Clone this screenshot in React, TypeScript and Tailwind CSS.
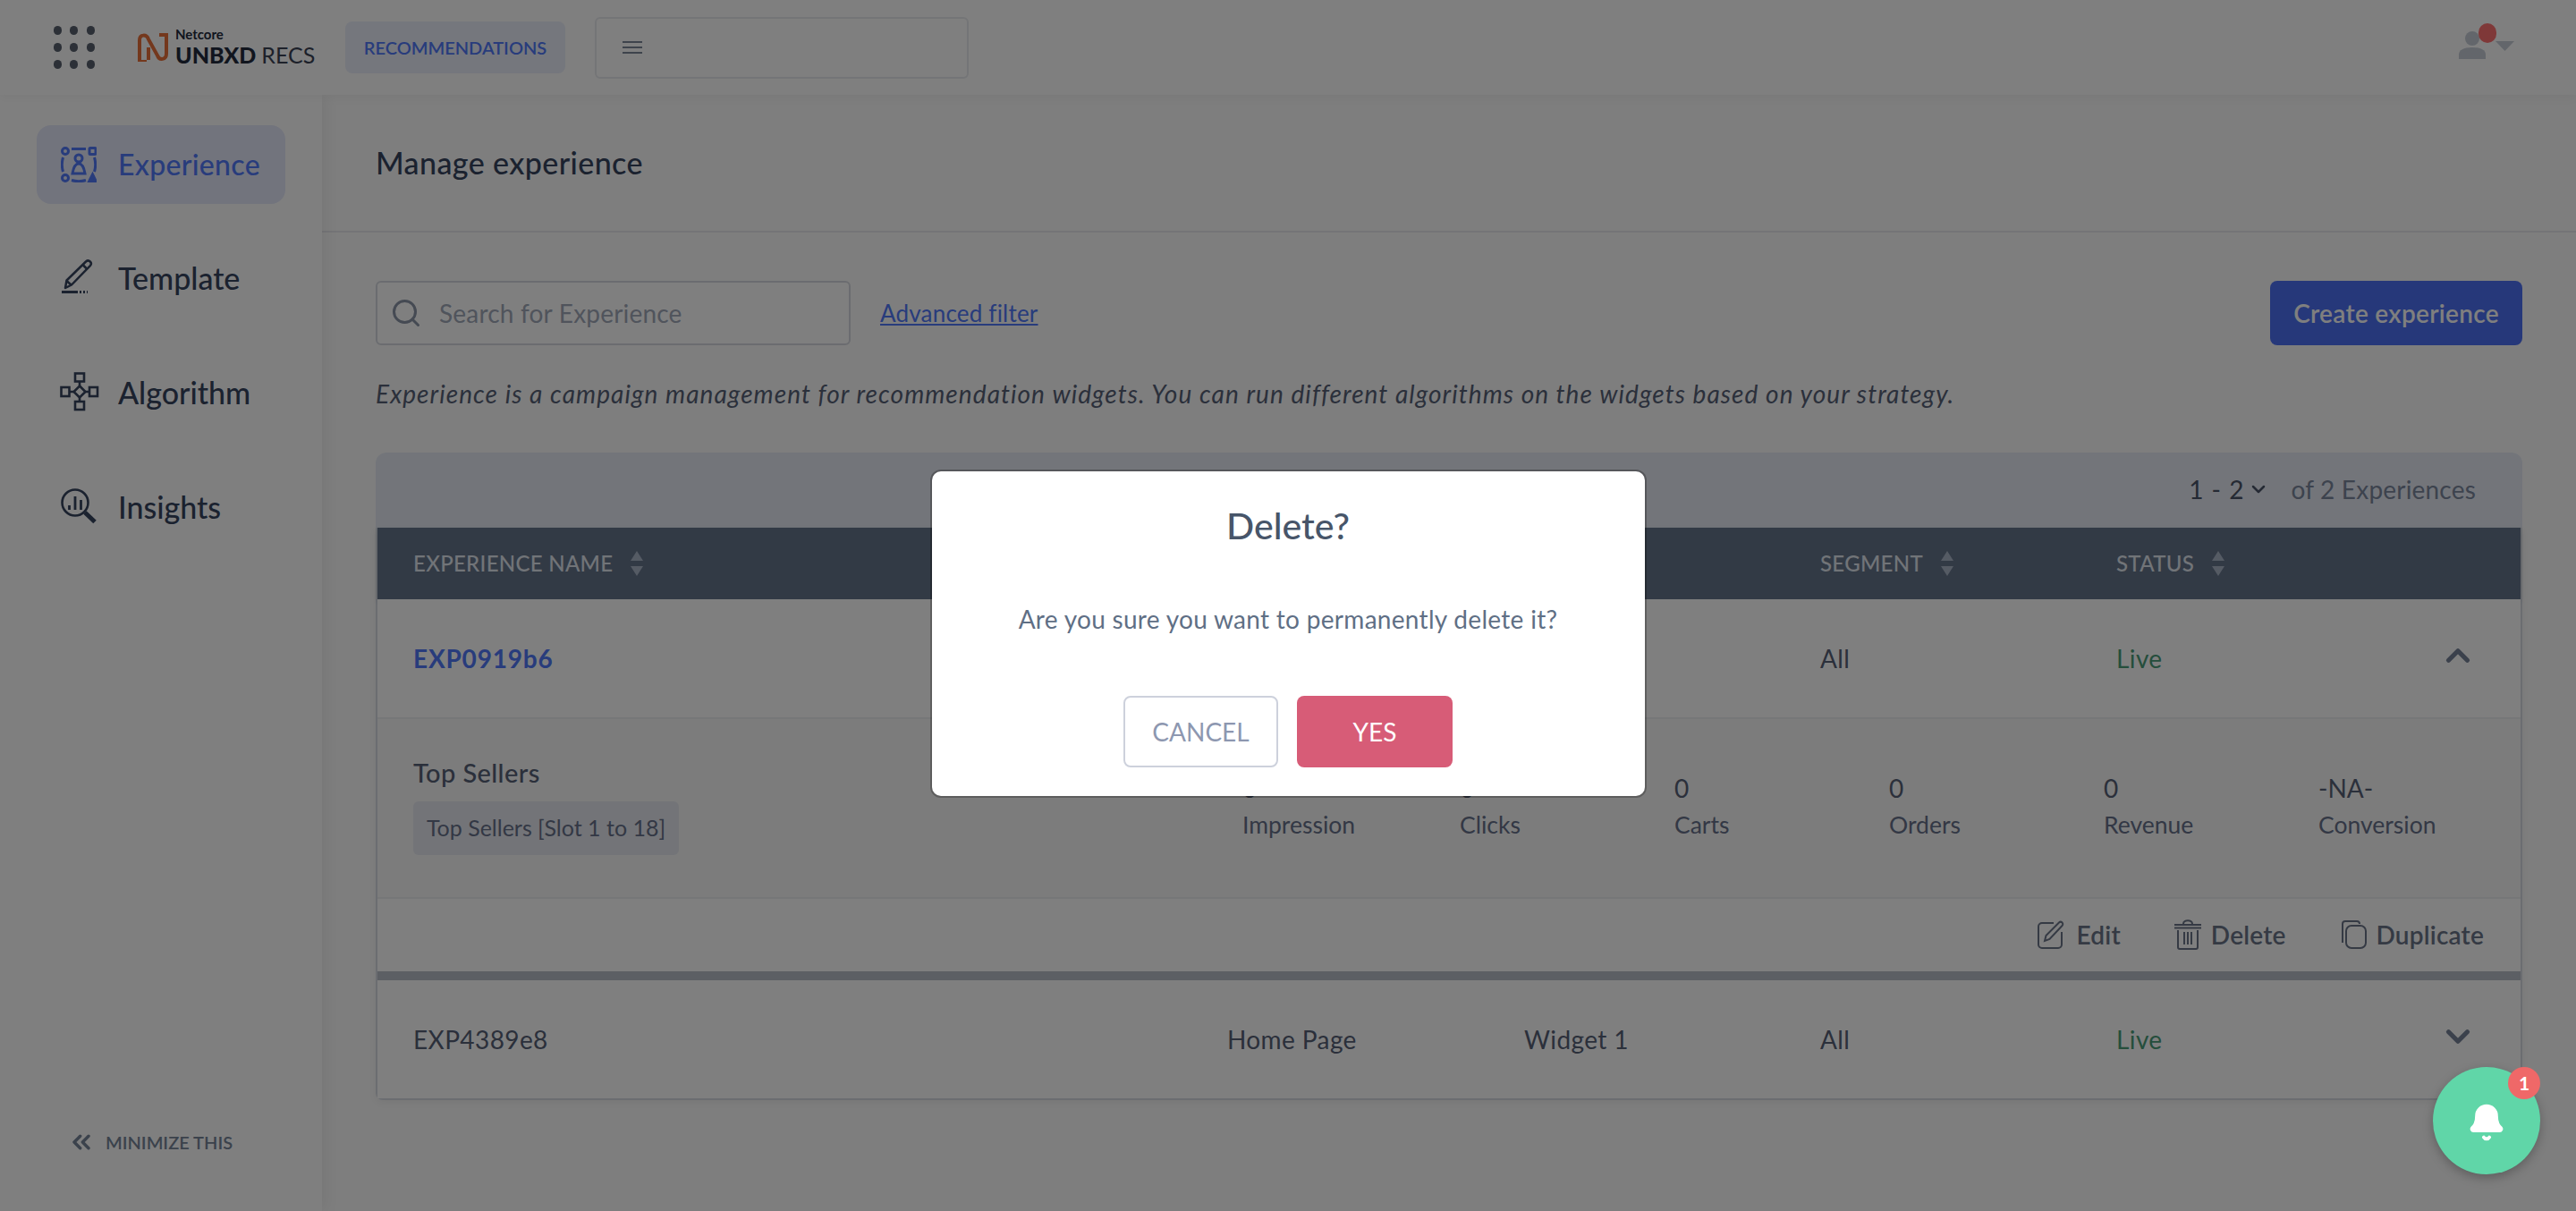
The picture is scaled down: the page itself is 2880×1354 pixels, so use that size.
import { Bell, ChevronDown, ChevronUp, ChevronsLeft, Search } from "lucide-react";

const navItems = [
  { label: "Template", icon: <TemplateIcon /> },
  { label: "Algorithm", icon: <AlgorithmIcon /> },
  { label: "Insights", icon: <InsightsIcon /> },
];

const metrics = [
  { value: "0", label: "Impression" },
  { value: "0", label: "Clicks" },
  { value: "0", label: "Carts" },
  { value: "0", label: "Orders" },
  { value: "0", label: "Revenue" },
  { value: "-NA-", label: "Conversion" },
];

function ExperienceIcon() {
  return (
    <svg width="40" height="40" viewBox="0 0 40 40" fill="none" stroke="currentColor" strokeWidth="3">
      <circle cx="5" cy="5" r="3.5" />
      <rect x="32" y="1.5" width="7" height="7" rx="1" />
      <circle cx="5" cy="35" r="3.5" />
      <path d="M35.5 31 39.5 39h-8z" fill="currentColor" />
      <path d="M12 2.5h16M12 37.5c5 1.5 11 1.5 16 0M2.5 12c-1.500 5-1.500 11 0 16M37.500 12c1.500 5 1.500 11 0 16" />
      <circle cx="20" cy="13" r="4" />
      <path d="M20 19c-4 0-6 5-7 11h14c-1-6-3-11-7-11z" />
    </svg>
  );
}

function TemplateIcon() {
  return (
    <svg width="42" height="42" viewBox="0 0 42 42" fill="none" stroke="currentColor" strokeWidth="2.5" strokeLinejoin="round">
      <path d="M6 33 7.500 24.500 29 3.500c1.500-1.300 3.500-1.300 4.800 0 1.300 1.300 1.300 3.200 0 4.600L13 29.500z" />
      <path d="M25.500 7 30.500 12M7.500 25 12.500 29.500" />
      <path d="M2 37.500h18" strokeWidth="3" />
      <path d="M22 37.500h9" strokeWidth="3" strokeDasharray="2 2" />
    </svg>
  );
}

function AlgorithmIcon() {
  return (
    <svg width="44" height="44" viewBox="0 0 44 44" fill="none" stroke="currentColor" strokeWidth="2.600">
      <rect x="17" y="1.500" width="10" height="9" />
      <rect x="17" y="33" width="10" height="9" />
      <rect x="1.500" y="17" width="9" height="10" />
      <rect x="33" y="17" width="9" height="10" />
      <path d="M22 15.500 28.500 22 22 28.500 15.500 22z" />
      <path d="M22 10.500v5M22 28.500V33M10.500 22h5M28.500 22H33" />
    </svg>
  );
}

function InsightsIcon() {
  return (
    <svg width="42" height="42" viewBox="0 0 42 42" fill="none" stroke="currentColor" strokeWidth="2.600">
      <circle cx="17" cy="17" r="14.500" />
      <path d="M10.500 20v5M17 10v15M23.500 14v11" strokeWidth="2.800" />
      <path d="M28 28 39 38.500" strokeWidth="5" />
    </svg>
  );
}

function LogoMark() {
  return (
    <svg width="34" height="32" viewBox="0 0 34 32" fill="none" stroke="#e8703a" strokeWidth="4">
      <path d="M2 32V8c0-7 8-7 10-1l10 18c2 6 10 5 10-2V2h-8" />
      <path d="M10 32H2M12 16v14" />
    </svg>
  );
}

function EditIcon() {
  return (
    <svg width="32" height="32" viewBox="0 0 32 32" fill="none" stroke="currentColor" strokeWidth="2">
      <path d="M19 3H6a4 4 0 0 0-4 4v20a4 4 0 0 0 4 4h18a4 4 0 0 0 4-4V13" />
      <path d="M9 23 10.500 17 25 2.500c1-1 2.500-1 3.500 0s1 2.500 0 3.500L14.500 21z" />
    </svg>
  );
}

function TrashIcon() {
  return (
    <svg width="30" height="34" viewBox="0 0 30 34" fill="none" stroke="currentColor" strokeWidth="2">
      <path d="M0 6h30M0 9.500h30M10 5c0-5 10-5 10 0" />
      <path d="M4 12v19a2 2 0 0 0 2 2h18a2 2 0 0 0 2-2V12" />
      <path d="M11 14v14M15 14v14M19 14v14" />
    </svg>
  );
}

function DuplicateIcon() {
  return (
    <svg width="30" height="32" viewBox="0 0 30 32" fill="none" stroke="currentColor" strokeWidth="2">
      <path d="M3 25V4a3 3 0 0 1 3-3h13a3 3 0 0 1 3 3" />
      <rect x="7" y="6" width="22" height="25" rx="6" />
    </svg>
  );
}

function SortArrows() {
  return (
    <svg width="14" height="28" viewBox="0 0 14 28" className="ml-[20px] text-[#aab6c8]" fill="currentColor">
      <path d="M7 0 14 11H0zM7 28 0 17h14z" />
    </svg>
  );
}

function UserMenu() {
  return (
    <div className="relative ml-auto mr-[69px] h-[40px] w-[62px]">
      <svg width="30" height="31" viewBox="0 0 30 31" className="absolute left-0 bottom-[7px] text-[#c6cdd6]" fill="currentColor">
        <circle cx="15" cy="8" r="8" />
        <path d="M0 31v-5c0-5 5-8 15-8s15 3 15 8v5z" />
      </svg>
      <span className="absolute left-[22px] top-[-7px] h-[22px] w-[20px] rounded-full bg-[#ff7070]" />
      <svg width="21" height="11" viewBox="0 0 21 11" className="absolute right-0 top-[13px] text-[#c6cdd6]" fill="currentColor">
        <path d="M0 0h21L10.500 11z" />
      </svg>
    </div>
  );
}

function TopBar() {
  return (
    <header className="relative z-10 flex h-[106px] shrink-0 items-center bg-white pl-[60px] shadow-[0_4px_10px_rgba(0,0,0,0.04)]">
      <div className="grid w-[46px] grid-cols-3 gap-x-[9px] gap-y-[9px]">
        {Array.from({ length: 9 }).map((_, i) => (
          <span key={i} className="h-[10px] w-[9px] rounded-full bg-[#58606e]" />
        ))}
      </div>
      <div className="ml-[48px] flex w-[200px] items-center">
        <LogoMark />
        <div className="ml-[8px] flex flex-col leading-none">
          <span className="text-[15px] font-bold text-[#222a3c]">Netcore</span>
          <span className="mt-[1px] text-[25px] font-black leading-[28px] text-[#222a3c]">
            UNBXD <span className="font-normal text-[#3a4254]">RECS</span>
          </span>
        </div>
      </div>
      <div className="ml-[32px] flex h-[58px] w-[246px] items-center justify-center rounded-[8px] bg-[#eaeefb] text-[20px] font-semibold text-[#5078f8]">
        RECOMMENDATIONS
      </div>
      <div className="ml-[33px] flex h-[69px] w-[418px] items-center rounded-[6px] border-2 border-[#e8eaee] pl-[29px]">
        <div className="flex w-[22px] flex-col gap-[4px]">
          <span className="h-[2px] bg-[#7c8698]" />
          <span className="h-[2px] bg-[#7c8698]" />
          <span className="h-[2px] bg-[#7c8698]" />
        </div>
      </div>
      <UserMenu />
    </header>
  );
}

function Sidebar() {
  return (
    <aside className="relative z-[5] flex w-[360px] shrink-0 flex-col bg-white px-[41px] pt-[34px] shadow-[4px_0_16px_rgba(0,0,0,0.06)]">
      <div className="flex h-[88px] w-[278px] items-center gap-[24px] rounded-[16px] bg-[#e4e8fb] pl-[27px] text-[32px] font-medium tracking-[0.3px] text-[#5078f8]">
        <ExperienceIcon />
        Experience
      </div>
      <nav className="mt-[60px] flex flex-col gap-[84px] pl-[26px]">
        {navItems.map((item) => (
          <div key={item.label} className="flex h-[44px] items-center text-[34px] font-medium text-[#36445f]">
            <span className="flex w-[65px] shrink-0">{item.icon}</span>
            {item.label}
          </div>
        ))}
      </nav>
      <div className="mt-auto mb-[61px] flex items-center pl-[36px] text-[20px] font-semibold text-[#778599]">
        <ChevronsLeft size={32} strokeWidth={2.6} className="ml-[-2px]" />
        <span className="ml-[11px]">MINIMIZE THIS</span>
      </div>
    </aside>
  );
}

function HeaderCell({ children }: { children: string }) {
  return (
    <div className="flex items-center text-[24px] font-medium tracking-[0.3px] text-[#e2e8f0]">
      {children}
      <SortArrows />
    </div>
  );
}

function ExperienceRow({ name, active, open }: { name: string; active?: boolean; open?: boolean }) {
  return (
    <div className="grid h-[132px] grid-cols-[910px_332px_331px_331px_331px_1fr] items-center bg-white pl-[40px] text-[28px] tracking-[0.4px] text-[#566076]">
      <span className={active ? "font-bold tracking-[0.8px] text-[#5078f8]" : ""}>{name}</span>
      <span>Home Page</span>
      <span>Widget 1</span>
      <span>All</span>
      <span className="text-[#4a9c78]">Live</span>
      <span className="mb-[6px] flex pl-[30px] text-[#778399]">
        {open ? <ChevronUp size={42} strokeWidth={3} /> : <ChevronDown size={42} strokeWidth={3} />}
      </span>
    </div>
  );
}

function Expanded() {
  return (
    <>
      <div className="flex h-[201px] border-t-2 border-[#eceef0] bg-[#f8f8f8] pl-[40px] pt-[40px]">
        <div className="w-[927px] shrink-0">
          <div className="text-[29px] leading-[40px] font-medium tracking-[0.4px] text-[#566076]">Top Sellers</div>
          <div className="mt-[12px] flex h-[60px] w-[297px] items-center justify-center rounded-[6px] bg-[#e6e9f0] text-[25px] text-[#67718a]">
            Top Sellers [Slot 1 to 18]
          </div>
        </div>
        <div className="grid flex-1 grid-cols-[243px_240px_240px_240px_240px_1fr] pt-[18px]">
          {metrics.map((m) => (
            <div key={m.label} className="flex flex-col gap-[2px] text-[#566076]">
              <span className="text-[28px] leading-[38px]">{m.value}</span>
              <span className="text-[26.5px] leading-[40px] text-[#67718a]">{m.label}</span>
            </div>
          ))}
        </div>
      </div>
      <div className="flex h-[83px] items-center justify-end border-t-2 border-[#eceef0] bg-white pb-[2px] pr-[41px] text-[28px] font-semibold tracking-[0.2px] text-[#6a7488]">
        <div className="flex items-center gap-[13px]">
          <EditIcon />
          Edit
        </div>
        <div className="ml-[60px] flex items-center gap-[11px]">
          <TrashIcon />
          Delete
        </div>
        <div className="ml-[60px] flex items-center gap-[11px]">
          <DuplicateIcon />
          Duplicate
        </div>
      </div>
      <div className="h-[10px] bg-[#b8bec8]" />
    </>
  );
}

function ExperienceTable() {
  return (
    <div className="mt-[46px]">
      <div className="flex h-[84px] items-center justify-end rounded-t-[12px] bg-[#e6ebf4] pb-[2px] pr-[52px] text-[28px] tracking-[0.2px]">
        <span className="tracking-[1px] text-[#4a5568]">1 - 2</span>
        <ChevronDown size={24} strokeWidth={2.5} className="ml-[4px] text-[#4a5568]" />
        <span className="ml-[24px] text-[#7a869c]">of 2 Experiences</span>
      </div>
      <div className="rounded-b-[8px] border-x-2 border-b-2 border-[#d6dbe3] shadow-[0_3px_8px_rgba(0,0,0,0.05)]">
        <div className="grid h-[80px] grid-cols-[910px_332px_331px_331px_1fr] items-center bg-[#64748b] pl-[40px] shadow-[0_3px_6px_rgba(0,0,0,0.1)]">
          <HeaderCell>EXPERIENCE NAME</HeaderCell>
          <HeaderCell>PAGE</HeaderCell>
          <HeaderCell>WIDGET</HeaderCell>
          <HeaderCell>SEGMENT</HeaderCell>
          <HeaderCell>STATUS</HeaderCell>
        </div>
        <ExperienceRow name="EXP0919b6" active open />
        <Expanded />
        <ExperienceRow name="EXP4389e8" />
      </div>
    </div>
  );
}

function DeleteDialog() {
  return (
    <div className="absolute inset-0 z-20 flex items-start justify-center bg-black/50 pt-[527px]">
      <div className="flex h-[363px] w-[797px] flex-col items-center rounded-[10px] bg-white pt-[33px] ring-2 ring-black/25">
        <h2 className="text-[41px] leading-[56px] font-medium text-[#475569]">Delete?</h2>
        <p className="mt-[56px] text-[28px] leading-[40px] tracking-[0.3px] text-[#5f6f85]">Are you sure you want to permanently delete it?</p>
        <div className="mt-[66px] flex gap-[21px] text-[28px]">
          <button className="h-[80px] w-[173px] rounded-[8px] border-2 border-[#cdd1dc] bg-white text-[#8d97b0]">CANCEL</button>
          <button className="h-[80px] w-[174px] rounded-[8px] bg-[#d75c77] text-white">YES</button>
        </div>
      </div>
    </div>
  );
}

function NotificationBell() {
  return (
    <div className="absolute right-[40px] bottom-[41px] z-30 flex h-[120px] w-[120px] items-center justify-center rounded-full bg-[#60d6a8] shadow-[0_4px_12px_rgba(0,0,0,0.25)]">
      <Bell size={44} fill="white" color="white" className="mt-[4px]" />
      <span className="absolute right-0 top-0 flex h-[36px] w-[36px] items-center justify-center rounded-full bg-[#ef6868] text-[21px] font-bold text-white">
        1
      </span>
    </div>
  );
}

export default function App() {
  return (
    <div className="relative flex h-[1354px] w-[2880px] flex-col overflow-hidden bg-white font-['Lato','Noto_Sans',sans-serif] text-[#4a5568]">
      <TopBar />
      <div className="flex min-h-0 flex-1">
        <Sidebar />
        <main className="flex-1 bg-[#fcfcfc]">
          <div className="flex h-[154px] items-center border-b-2 border-[#e8e8ee] pl-[60px] pb-[2px] text-[34px] font-medium tracking-[0.4px] text-[#36445f]">
            Manage experience
          </div>
          <div className="px-[60px] pt-[54px]">
            <div className="flex h-[72px] items-center">
              <div className="flex h-[72px] w-[531px] items-center rounded-[6px] border-2 border-[#d6d9e0] bg-white pl-[14px] text-[28px] tracking-[0.2px] text-[#a0a8b8]">
                <Search size={36} strokeWidth={2} className="text-[#8a94a6]" />
                <span className="ml-[19px]">Search for Experience</span>
              </div>
              <a className="ml-[33px] text-[26px] tracking-[0.2px] text-[#5078f8] underline">Advanced filter</a>
              <button className="ml-auto h-[72px] w-[282px] rounded-[8px] bg-[#4c70f4] text-[28px] font-semibold tracking-[0.3px] text-white">
                Create experience
              </button>
            </div>
            <p className="mt-[34px] text-[28px] leading-[40px] tracking-[1.07px] text-[#566076] italic">
              Experience is a campaign management for recommendation widgets. You can run different algorithms on the widgets based on your strategy.
            </p>
            <ExperienceTable />
          </div>
        </main>
      </div>
      <DeleteDialog />
      <NotificationBell />
    </div>
  );
}
